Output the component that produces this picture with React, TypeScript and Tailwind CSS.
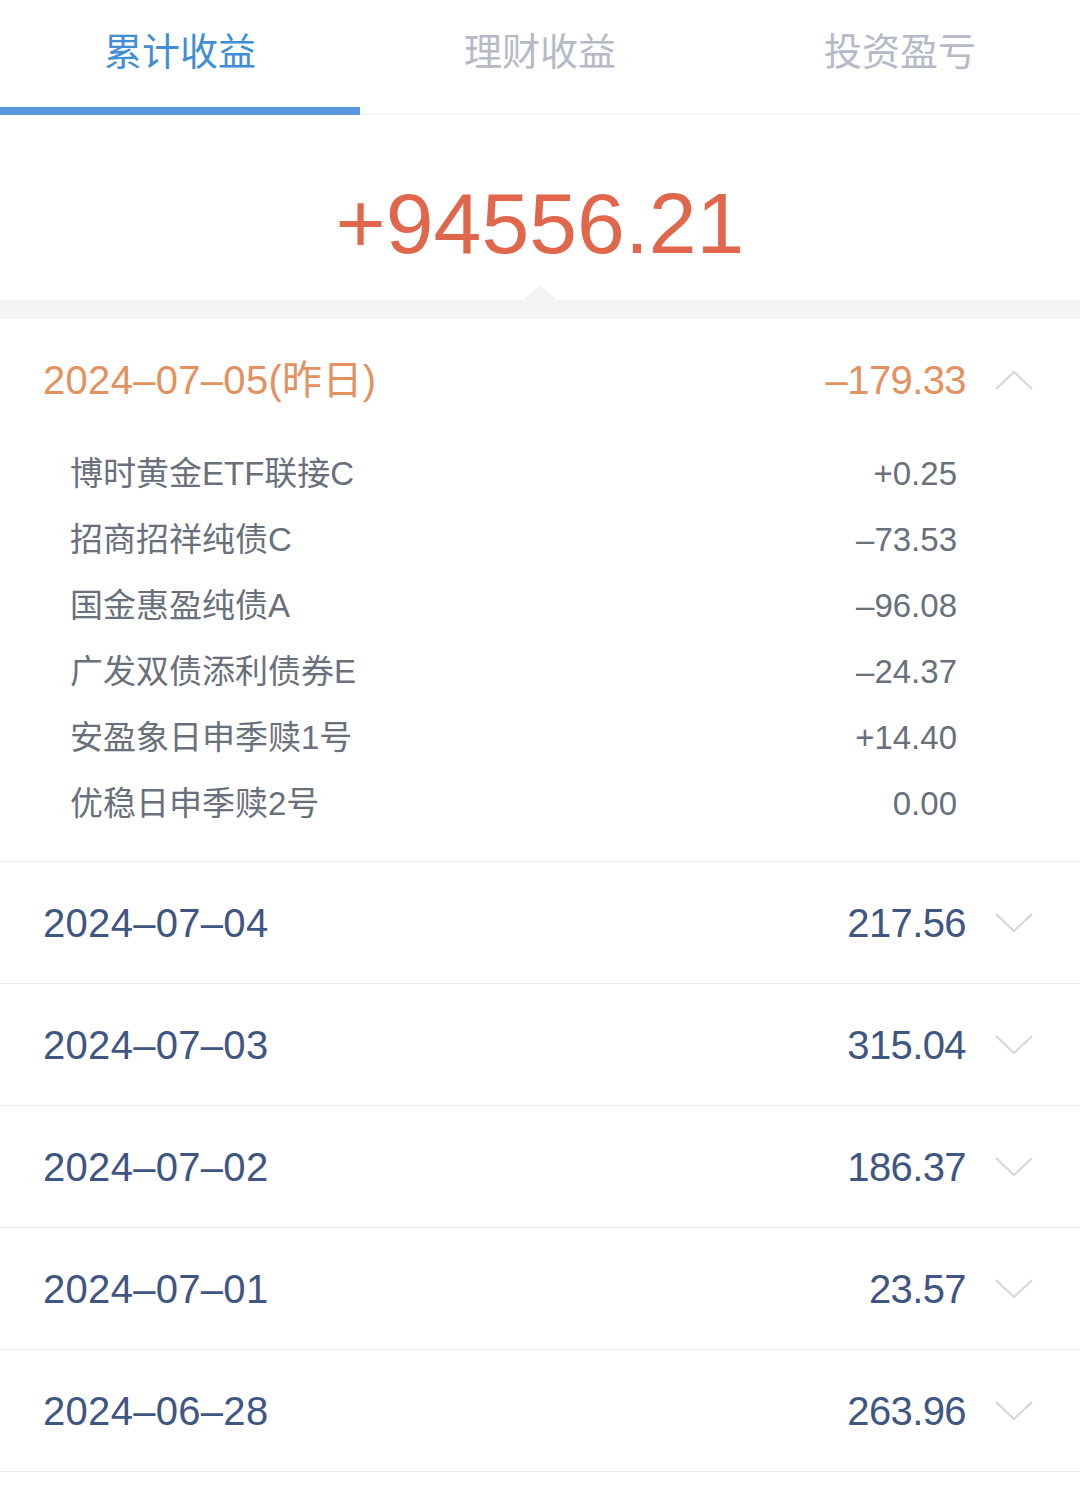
import { useState } from 'react'

interface FundItem {
  name: string
  value: string
}

interface DayRow {
  date: string
  label?: string
  total: string
  items?: FundItem[]
}

const rows: DayRow[] = [
  {
    date: '2024–07–05',
    label: '(昨日)',
    total: '–179.33',
    items: [
      { name: '博时黄金ETF联接C', value: '+0.25' },
      { name: '招商招祥纯债C', value: '–73.53' },
      { name: '国金惠盈纯债A', value: '–96.08' },
      { name: '广发双债添利债券E', value: '–24.37' },
      { name: '安盈象日申季赎1号', value: '+14.40' },
      { name: '优稳日申季赎2号', value: '0.00' },
    ],
  },
  { date: '2024–07–04', total: '217.56' },
  { date: '2024–07–03', total: '315.04' },
  { date: '2024–07–02', total: '186.37' },
  { date: '2024–07–01', total: '23.57' },
  { date: '2024–06–28', total: '263.96' },
]

const tabs = ['累计收益', '理财收益', '投资盈亏']

function Chevron({ up }: { up?: boolean }) {
  return (
    <svg width="38" height="20" viewBox="0 0 38 20" className="shrink-0">
      <polyline
        points={up ? '1,19 19,2 37,19' : '1,1 19,18 37,1'}
        fill="none"
        stroke="#d3d6da"
        strokeWidth="2"
      />
    </svg>
  )
}

export default function App() {
  const [activeTab, setActiveTab] = useState(0)
  const [openDate, setOpenDate] = useState('2024–07–05')

  return (
    <div
      className="w-[1080px] min-h-[1487px] bg-white"
      style={{ fontFamily: '"Liberation Sans", "Noto Sans CJK SC", sans-serif' }}
    >
      {/* Tabs */}
      <div className="flex h-[115px] border-b border-[#efefef]">
        {tabs.map((tab, i) => (
          <button
            key={tab}
            onClick={() => setActiveTab(i)}
            className={`relative flex-1 flex items-start justify-center pt-[29px] text-[38px] leading-[46px] ${
              activeTab === i ? 'text-[#3f8ed6]' : 'text-[#b6bac7]'
            }`}
          >
            {tab}
            {activeTab === i && (
              <span className="absolute left-0 right-0 bottom-[-1px] h-[8px] bg-[#5b95dc]" />
            )}
          </button>
        ))}
      </div>

      {/* Total */}
      <div className="relative h-[185px] flex items-start justify-center pt-[60px]">
        <span className="text-[86px] leading-[96px] text-[#e0674c]">+94556.21</span>
        <span className="absolute left-[523px] bottom-0 w-0 h-0 border-l-[17px] border-r-[17px] border-b-[15px] border-l-transparent border-r-transparent border-b-[#f4f4f4]" />
      </div>
      <div className="h-[19px] bg-[#f4f4f4]" />

      {/* Daily list */}
      <div>
        {rows.map((row) => {
          const open = openDate === row.date
          const highlight = !!row.label
          return (
            <div key={row.date} className="border-b border-[#ececec]">
              <button
                onClick={() => setOpenDate(open ? '' : row.date)}
                className="w-full h-[121px] flex items-center pl-[43px] pr-[47px]"
              >
                <span
                  className={`flex-1 text-left text-[40px] tracking-[0.3px] ${
                    highlight ? 'text-[#e3925f]' : 'text-[#3f5683]'
                  }`}
                >
                  {row.date}
                  {row.label}
                </span>
                <span
                  className={`text-[40px] mr-[29px] tracking-[-0.6px] ${
                    highlight ? 'text-[#e3925f]' : 'text-[#3f5683]'
                  }`}
                >
                  {row.total}
                </span>
                <Chevron up={open} />
              </button>
              {open && row.items && (
                <div className="pt-[1px] pb-[24px]">
                  {row.items.map((item) => (
                    <div
                      key={item.name}
                      className="h-[66px] flex items-center justify-between pl-[70px] pr-[123px] text-[33px] text-[#6a707b]"
                    >
                      <span>{item.name}</span>
                      <span>{item.value}</span>
                    </div>
                  ))}
                </div>
              )}
            </div>
          )
        })}
      </div>
    </div>
  )
}
